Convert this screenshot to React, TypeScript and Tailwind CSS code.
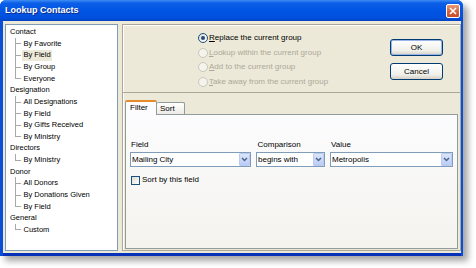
import React from "react";

const tree = [
  { label: "Contact", children: ["By Favorite", "By Field", "By Group", "Everyone"] },
  { label: "Designation", children: ["All Designations", "By Field", "By Gifts Received", "By Ministry"] },
  { label: "Directors", children: ["By Ministry"] },
  { label: "Donor", children: ["All Donors", "By Donations Given", "By Field"] },
  { label: "General", children: ["Custom"] },
];

function Radio({ checked, disabled, children }: { checked?: boolean; disabled?: boolean; children: React.ReactNode }) {
  return (
    <div className="flex items-center h-[14.5px]">
      <span
        className={`w-[10px] h-[10px] rounded-full border flex items-center justify-center ${
          disabled
            ? "border-[#cac8bb] bg-[#f4f3ec]"
            : "border-[#1c5180] bg-[linear-gradient(135deg,#dcdbd5,#ffffff)]"
        }`}
      >
        {checked && <span className="w-[4px] h-[4px] rounded-full bg-[#2e4a72]" />}
      </span>
      <span className={`ml-[1px] ${disabled ? "text-[#aca899]" : "text-black"}`}>{children}</span>
    </div>
  );
}

function Combo({ value }: { value: string }) {
  return (
    <div className="h-[15px] border border-[#7f9db9] bg-white flex items-center justify-between">
      <span className="pl-[1px] leading-[13px]">{value}</span>
      <span className="w-[11px] h-[13px] mr-[0px] rounded-[1px] border border-[#b9cbf3] bg-[linear-gradient(180deg,#dbe5fb,#b9cdf6)] flex items-center justify-center">
        <svg width="7" height="5" viewBox="0 0 7 5">
          <path d="M1 1 L3.5 3.5 L6 1" fill="none" stroke="#4d6185" strokeWidth="1.4" />
        </svg>
      </span>
    </div>
  );
}

function XpButton({ label, isDefault }: { label: string; isDefault?: boolean }) {
  return (
    <div
      className={`w-[53px] h-[17px] rounded-[3px] border border-[#003c74] flex items-center justify-center bg-[linear-gradient(180deg,#ffffff,#f0f0ea_70%,#d6d0c5)] ${
        isDefault ? "shadow-[inset_0_0_0_1px_#98b4e8]" : ""
      }`}
    >
      {label}
    </div>
  );
}

export default function App() {
  return (
    <div className="w-[476px] h-[268px] bg-white font-['Liberation_Sans',Arial,sans-serif] text-[8px] text-black">
      {/* Window */}
      <div className="w-[463px] h-[256px] rounded-t-[6px] bg-[#0a4fd8] shadow-[5px_5px_6px_rgba(0,0,0,0.35)] flex flex-col">
        {/* Title bar */}
        <div className="h-[21px] rounded-t-[6px] bg-[linear-gradient(180deg,#3d8cf5_0%,#0a5ee6_15%,#0054e3_55%,#0150dd_85%,#0044c4_100%)] flex items-center pl-[5px] pr-[3px]">
          <span className="pt-[1px] text-white font-bold text-[9px] [text-shadow:1px_1px_0_#0a2a8a]">Lookup Contacts</span>
          <div className="ml-auto w-[14px] h-[14px] rounded-[2px] border border-white bg-[linear-gradient(180deg,#e89a74,#d2603a_60%,#c34f2c)] flex items-center justify-center">
            <svg width="8" height="8" viewBox="0 0 8 8">
              <path d="M1 1 L7 7 M7 1 L1 7" stroke="#ffffff" strokeWidth="1.6" />
            </svg>
          </div>
        </div>

        {/* Body */}
        <div className="ml-[3px] mr-[2px] h-[232px] bg-[#ece9d8] flex pl-[2px] pt-[3px] pb-[2px] gap-[4px] shadow-[0_3px_0_#0831b9]">
          {/* Tree */}
          <div className="w-[113px] h-[227px] bg-white border border-[#7f9db9] pt-[1px] text-[7.5px]">
            {tree.map((group) => (
              <div key={group.label}>
                <div className="h-[11.625px] flex items-center pl-[4px]">{group.label}</div>
                {group.children.map((child, i) => {
                  const last = i === group.children.length - 1;
                  const selected = group.label === "Contact" && child === "By Field";
                  return (
                    <div key={child + i} className="h-[11.625px] flex items-center pl-[9px]">
                      <div className="w-[7px] self-stretch relative">
                        <span
                          className={`absolute left-0 top-0 w-px bg-[#a8a8a8] ${last ? "h-1/2" : "h-full"}`}
                        />
                        <span className="absolute left-0 top-1/2 w-[6px] h-px bg-[#a8a8a8]" />
                      </div>
                      <span
                        className={`h-[11px] flex items-center px-[1.5px] ${selected ? "bg-[#ece9d8]" : ""}`}
                      >
                        {child}
                      </span>
                    </div>
                  );
                })}
              </div>
            ))}
          </div>

          {/* Right side */}
          <div className="w-[339px] h-[227px] border border-[#aca899] shadow-[inset_1px_1px_0_#ffffff] flex flex-col">
            {/* Options */}
            <div className="h-[68px] border-b border-[#aca899] flex">
              <div className="flex flex-col pl-[75px] pt-[6px]">
                <Radio checked>
                  <span className="underline">R</span>eplace the current group
                </Radio>
                <Radio disabled>
                  <span className="underline">L</span>ookup within the current group
                </Radio>
                <Radio disabled>
                  <span className="underline">A</span>dd to the current group
                </Radio>
                <Radio disabled>
                  <span className="underline">T</span>ake away from the current group
                </Radio>
              </div>
              <div className="ml-auto mr-[17px] pt-[14px] flex flex-col gap-[7px]">
                <XpButton label="OK" isDefault />
                <XpButton label="Cancel" />
              </div>
            </div>

            {/* Tabs */}
            <div className="mt-[7px] mx-[2px] flex flex-col">
              <div className="h-[14px] flex items-end">
                <div className="relative z-10 w-[32px] h-[15px] -mb-px border border-b-0 border-[#919b9c] border-t-2 border-t-[#e68b2c] rounded-t-[2px] bg-[#fcfcfe] flex items-center pl-[4px] pb-[1px]">
                  Filter
                </div>
                <div className="w-[28px] h-[12px] border border-b-0 border-l-0 border-[#919b9c] rounded-t-[2px] bg-[linear-gradient(180deg,#ffffff,#ecebe5)] flex items-center pl-[3px]">
                  Sort
                </div>
              </div>
              <div className="h-[135px] border border-[#919b9c] bg-[linear-gradient(180deg,#fcfcfe,#f4f3ee)] pl-[4px] pt-[25px]">
                <div className="flex gap-[5px]">
                  <div className="w-[121px] flex flex-col">
                    <span className="pl-[1px] leading-[10px]">Field</span>
                    <div className="mt-[2px]">
                      <Combo value="Mailing City" />
                    </div>
                  </div>
                  <div className="w-[69px] flex flex-col">
                    <span className="pl-[1.5px] leading-[10px]">Comparison</span>
                    <div className="mt-[2px]">
                      <Combo value="begins with" />
                    </div>
                  </div>
                  <div className="w-[123px] flex flex-col">
                    <span className="pl-[1px] leading-[10px]">Value</span>
                    <div className="mt-[2px]">
                      <Combo value="Metropolis" />
                    </div>
                  </div>
                </div>
                <div className="mt-[7px] ml-[1px] flex items-center gap-[2px]">
                  <span className="w-[9px] h-[9px] border border-[#1c5180] bg-[linear-gradient(135deg,#dcdbd5,#ffffff)]" />
                  <span>Sort by this field</span>
                </div>
              </div>
            </div>
          </div>
        </div>
      </div>
    </div>
  );
}
